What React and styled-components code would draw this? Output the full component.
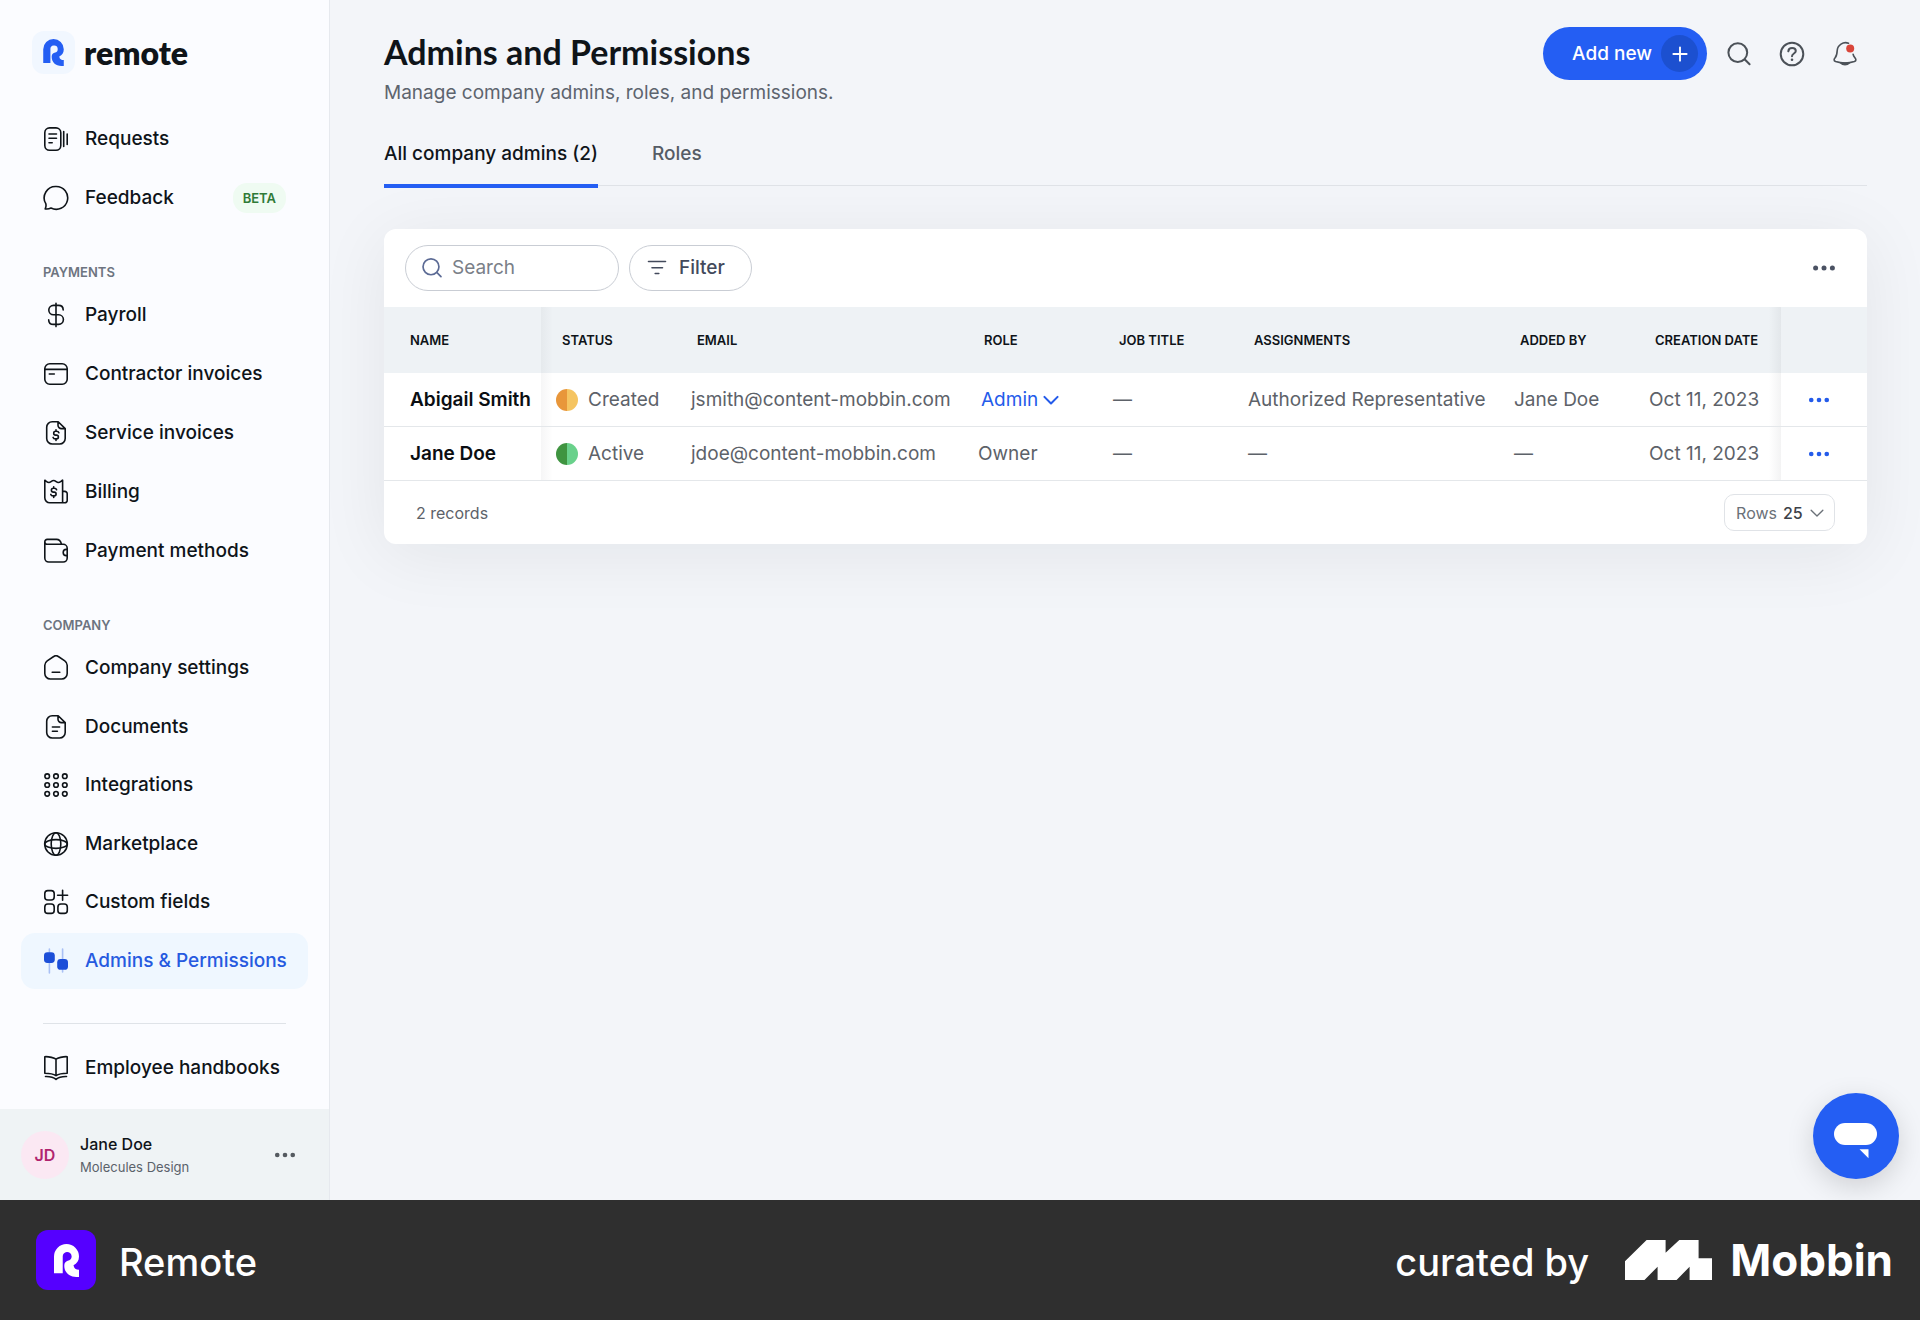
import { useState } from "react"
import styled, { createGlobalStyle, css } from "styled-components"

const GlobalStyle = createGlobalStyle`
    *{
        box-sizing: border-box;
    }
    body{
        margin: 0;
        background: #f3f5f9;
        color: #0f1419;
        font-family: Inter, "Liberation Sans", sans-serif;
        font-size: 19px;
        line-height: 26px;
    }
    button, input, select{
        font: inherit;
        color: inherit;
    }
    h1, p, ul{
        margin: 0;
        padding: 0;
    }
`

const FOLD = "M9.2 1.7h6l7 6.9v9.9a5.5 5.5 0 0 1-5.5 5.5H9.2a5.5 5.5 0 0 1-5.5-5.5V7.2a5.5 5.5 0 0 1 5.5-5.5z M15 1.8v3.4a3.4 3.4 0 0 0 3.4 3.4h3.7"
const DOLLAR = "M15.9 12.8c-.3-1-1.2-1.5-2.4-1.5h-.9a1.9 1.9 0 0 0 0 3.8h.9a1.9 1.9 0 0 1 0 3.8h-.9c-1.3 0-2.2-.5-2.5-1.5M13 9.8v1.4M13 19v1.4"

const icons = {
    requests: <>
        <rect x="1.8" y="1.9" width="16" height="22.4" rx="4.8" />
        <path d="M6 8h7.5M6 12.2h7.5M6 16.8h3.2M20.7 5.5v15M24.2 8v10.5" />
    </>,
    feedback: <path d="M13.2 1.5a11.4 11.4 0 1 1-5.2 21.5c-1.8 .9-3.8 1.2-5.8 .9 .8-1.7 1.1-3.4 .6-5.2A11.4 11.4 0 0 1 13.2 1.5z" />,
    payroll: <path d="M13 1.2v23.4M20.2 8c0-3-1.9-4.6-4.7-4.6h-5a4.7 4.7 0 0 0 0 9.4h5.1a4.8 4.8 0 0 1 0 9.6h-5.1c-3 0-4.8-1.6-4.8-4.5" />,
    contractor: <>
        <rect x="1.8" y="2.8" width="22.4" height="20.4" rx="5" />
        <path d="M1.8 8.4h22.4M6.3 13h5" />
    </>,
    service: <path d={ `${ FOLD }${ DOLLAR }` } />,
    billing: <>
        <path d="M1.8 1.2c1.5 1 2.6 2.3 4.2 2.3s2.6-2 4.6-2 3 2 4.6 2 2.8-1.3 4.4-2.3v22.6H6.8a5 5 0 0 1-5-5zM19.6 12.4h2.2a2.4 2.4 0 0 1 2.4 2.4v6.6a2.4 2.4 0 0 1-2.4 2.4h-3" />
        <path d={ DOLLAR } transform="translate(-2.3 -2)" />
    </>,
    wallet: <path d="M1.8 4v16a4 4 0 0 0 4 4h14.4a4 4 0 0 0 4-4v-9.7a4 4 0 0 0-4-4H4.3A2.5 2.5 0 0 1 1.8 3.8a2.4 2.4 0 0 1 2.4-2.4h9.4c2.5 0 4 1.5 4.9 4.7M24.2 11.4h-.9a3.1 3.1 0 0 0 0 6.2h.9" />,
    company: <path d="M10.7 1.5a4 4 0 0 1 4.6 0l6.5 4.3a5.5 5.5 0 0 1 2.4 4.5v8.2a5.5 5.5 0 0 1-5.5 5.5H7.3a5.5 5.5 0 0 1-5.5-5.5v-8.2a5.5 5.5 0 0 1 2.4-4.5zM9.2 17.2h7.6" />,
    documents: <path d={ `${ FOLD }M9.4 13h7.2M9.4 17.2h5` } />,
    integrations: [4.2, 13, 21.8].map( y => [4.2, 13, 21.8].map( x =>
        <circle key={ `${ x }-${ y }` } cx={ x } cy={ y } r="2.3" />
    )),
    marketplace: <>
        <circle cx="13" cy="13" r="11.3" />
        <ellipse cx="13" cy="13" rx="4.8" ry="11.3" />
        <ellipse cx="13" cy="13" rx="11.3" ry="4.4" />
    </>,
    custom: <>
        <rect x="1.8" y="1.6" width="9.4" height="9.4" rx="3" />
        <rect x="1.8" y="15" width="9.4" height="9.4" rx="3" />
        <rect x="14.9" y="15" width="9.4" height="9.4" rx="3" />
        <path d="M14.6 6.2h10M19.6 1.2v10" />
    </>,
    admins: <>
        <path d="M6.4 1v24M19.6 1v23" stroke="#a9c0f5" />
        <rect x="1" y="4.2" width="10.8" height="10.8" rx="3.4" fill="#1d4fd8" stroke="none" />
        <rect x="14.2" y="11" width="10.8" height="10.8" rx="3.4" fill="#1d4fd8" stroke="none" />
    </>,
    book: <path d="M13 4.2C11.5 3 6 1.4 1.8 1.7v16.5c4.2 0 8.2 .4 11.2 2.5 3-2.1 7-2.5 11.2-2.5V1.7C20 1.4 14.5 3 13 4.2zM13 4.2v16.5M2.5 21.5c4.3-.1 7.5 .2 10.5 2.8 3-2.6 6.2-2.9 10.5-2.8" />,
    search: <path strokeWidth="2" d="M11.8 2.2a9.4 9.4 0 1 1 0 18.8 9.4 9.4 0 0 1 0-18.8zM18.6 18.2l5 5" />,
    help: <>
        <circle cx="13" cy="13" r="11.3" strokeWidth="2" />
        <path strokeWidth="2" d="M9.3 10.3c.2-2 1.7-3.3 3.8-3.3 2.2 0 3.7 1.2 3.7 3 0 2.6-3.8 2.5-3.8 5.2" />
        <circle cx="13" cy="18.8" r="1.3" fill="currentColor" stroke="none" />
    </>,
    bell: <>
        <path d="M16.5 2.2a8.4 8.4 0 0 0-11.3 7.4c-.2 4.2-.6 5.4-2 7-1.4 1.5-1.6 3.2.4 4 6 1.9 12.8 1.9 18.8 0 2-.8 1.8-2.5.4-4-1-1.1-1.5-2-1.7-3.4" />
        <path d="M8.8 22a4.8 3.2 0 0 0 8.4 0z" fill="#9aa0a8" />
        <circle cx="18.2" cy="7.6" r="4" fill="#d9453a" stroke="none" />
    </>,
    filter: <path d="M4.5 6.5h17M8 12.8h10.5M11.2 18.5h3.6" />,
    plus: <path strokeWidth="2" d="M13 5.8v14.4M5.8 13h14.4" />,
    dots: <g fill="currentColor" stroke="none">
        <circle cx="4.6" cy="13" r="2.5" />
        <circle cx="13" cy="13" r="2.5" />
        <circle cx="21.4" cy="13" r="2.5" />
    </g>,
    chevron: <path strokeWidth="3" d="M3.5 8.5l9.5 9.5 9.5-9.5" />,
    thinChevron: <path strokeWidth="2.2" d="M3.5 8.5l9.5 9.5 9.5-9.5" />,
}

const Icon = ({ name, size = 26 }) => (
    <IconSvg width={ size } height={ size } viewBox="0 0 26 26" aria-hidden="true">
        { icons[name] }
    </IconSvg>
)

const RemoteMark = ({ width, height }) => (
    <svg width={ width } height={ height } viewBox="0 0 73 96" fill="currentColor" aria-hidden="true">
        <path d="M0 85V36.5a36.5 36.5 0 0 1 73 0C73 49 67 57 57 62c1 9 7 13 16 13v21h-8C44 96 30 82 30 63c0-8 4-12 10-14a13 13 0 1 0-14.5-12V85z" />
    </svg>
)

const mainLinks = [
    { icon: "requests", text: "Requests" },
    { icon: "feedback", text: "Feedback", badge: "BETA" },
]

const paymentLinks = [
    { icon: "payroll", text: "Payroll" },
    { icon: "contractor", text: "Contractor invoices" },
    { icon: "service", text: "Service invoices" },
    { icon: "billing", text: "Billing" },
    { icon: "wallet", text: "Payment methods" },
]

const companyLinks = [
    { icon: "company", text: "Company settings" },
    { icon: "documents", text: "Documents" },
    { icon: "integrations", text: "Integrations" },
    { icon: "marketplace", text: "Marketplace" },
    { icon: "custom", text: "Custom fields" },
    { icon: "admins", text: "Admins & Permissions", active: true },
]

const columns = [
    { title: "Name", width: 157 },
    { title: "Status", width: 135 },
    { title: "Email", width: 287 },
    { title: "Role", width: 135 },
    { title: "Job title", width: 135 },
    { title: "Assignments", width: 266 },
    { title: "Added by", width: 135 },
    { title: "Creation date", width: 147 },
    { title: "", width: 86 },
]

const admins = [
    {
        id: 1,
        name: "Abigail Smith",
        status: "Created",
        colors: ["#e8963a", "#f5c461"],
        email: "jsmith@content-mobbin.com",
        role: "Admin",
        editable: true,
        assignments: "Authorized Representative",
        addedBy: "Jane Doe",
        created: "Oct 11, 2023",
    },
    {
        id: 2,
        name: "Jane Doe",
        status: "Active",
        colors: ["#3f9440", "#69d18b"],
        email: "jdoe@content-mobbin.com",
        role: "Owner",
        created: "Oct 11, 2023",
    },
]

const NavList = ({ links, fill }) => (
    <List $fill={ fill }>
        { links.map( link => (
            <li key={ link.text }>
                <NavLink href="#" $active={ link.active }>
                    <Icon name={ link.icon } />
                    { link.text }
                    { link.badge && <Badge>{ link.badge }</Badge> }
                </NavLink>
            </li>
        ))}
    </List>
)

const Sidebar = () => (
    <Aside>
        <Brand href="#">
            <BrandTile><RemoteMark width={ 21 } height={ 27 } /></BrandTile>
            remote
        </Brand>
        <Nav>
            <NavList links={ mainLinks } />
            <SectionTitle>PAYMENTS</SectionTitle>
            <NavList links={ paymentLinks } />
            <SectionTitle>COMPANY</SectionTitle>
            <NavList links={ companyLinks } fill />
            <Divider />
            <NavList links={ [{ icon: "book", text: "Employee handbooks" }] } />
        </Nav>
        <UserBar>
            <Avatar>JD</Avatar>
            <UserInfo>
                <UserName>Jane Doe</UserName>
                <UserCompany>Molecules Design</UserCompany>
            </UserInfo>
            <IconButton aria-label="Account menu"><Icon name="dots" size={ 24 } /></IconButton>
        </UserBar>
    </Aside>
)

const AdminsTable = () => (
    <Table>
        <colgroup>
            { columns.map( ({ title, width }) => <col key={ title } style={ { width } } /> ) }
        </colgroup>
        <thead>
            <tr>
                { columns.map( ({ title }) => <th key={ title }>{ title.toUpperCase() }</th> ) }
            </tr>
        </thead>
        <tbody>
            { admins.map( admin => (
                <tr key={ admin.id }>
                    <td>{ admin.name }</td>
                    <td>
                        <Status>
                            <StatusDot $colors={ admin.colors } />
                            { admin.status }
                        </Status>
                    </td>
                    <td>{ admin.email }</td>
                    <td>
                        { admin.editable
                            ? <RolePicker>
                                <select aria-label="Role" defaultValue={ admin.role }>
                                    <option>{ admin.role }</option>
                                </select>
                                <Icon name="chevron" size={ 18 } />
                              </RolePicker>
                            : admin.role
                        }
                    </td>
                    <td>{ admin.jobTitle || "—" }</td>
                    <td>{ admin.assignments || "—" }</td>
                    <td>{ admin.addedBy || "—" }</td>
                    <td>{ admin.created }</td>
                    <td>
                        <IconButton $color="#245bea" aria-label={ `Actions for ${ admin.name }` }>
                            <Icon name="dots" size={ 24 } />
                        </IconButton>
                    </td>
                </tr>
            ))}
        </tbody>
    </Table>
)

const App = () => {

  const [ tab, setTab ] = useState( "all" )

  return (
    <Page>
        <GlobalStyle />
        <Sidebar />
        <Main>
            <Header>
                <div>
                    <Title>Admins and Permissions</Title>
                    <Subtitle>Manage company admins, roles, and permissions.</Subtitle>
                </div>
                <HeaderActions>
                    <AddButton>
                        Add new
                        <PlusCircle><Icon name="plus" size={ 24 } /></PlusCircle>
                    </AddButton>
                    <IconButton $color="#4b5158" aria-label="Search"><Icon name="search" /></IconButton>
                    <IconButton $color="#4b5158" aria-label="Help"><Icon name="help" /></IconButton>
                    <IconButton $color="#4b5158" aria-label="Notifications"><Icon name="bell" /></IconButton>
                </HeaderActions>
            </Header>
            <Tabs role="tablist">
                <Tab role="tab" aria-selected={ tab === "all" } $active={ tab === "all" } onClick={ ()=> setTab( "all" ) }>All company admins (2)</Tab>
                <Tab role="tab" aria-selected={ tab === "roles" } $active={ tab === "roles" } onClick={ ()=> setTab( "roles" ) }>Roles</Tab>
            </Tabs>
            <Card>
                <Toolbar>
                    <SearchBox>
                        <Icon name="search" size={ 22 } />
                        <input type="search" placeholder="Search" aria-label="Search admins" />
                    </SearchBox>
                    <FilterButton>
                        <Icon name="filter" />
                        Filter
                    </FilterButton>
                    <IconButton $color="#4b5263" aria-label="Table options"><Icon name="dots" /></IconButton>
                </Toolbar>
                <AdminsTable />
                <CardFooter>
                    2 records
                    <RowsPicker>
                        Rows
                        <select defaultValue="25">
                            <option>25</option>
                        </select>
                        <Icon name="thinChevron" size={ 16 } />
                    </RowsPicker>
                </CardFooter>
            </Card>
            <ChatButton aria-label="Open chat">
                <svg width="44" height="36" viewBox="0 0 44 36" fill="#fff">
                    <rect x="0" y="0" width="43" height="22" rx="11" />
                    <path d="M25.5 26.2h9v9z" />
                </svg>
            </ChatButton>
        </Main>
        <BottomBar>
            <AppTile><RemoteMark width={ 25 } height={ 33 } /></AppTile>
            <BarText>Remote</BarText>
            <Curated>
                <BarText>curated by</BarText>
                <svg width="87" height="40" viewBox="0 0 87 40" fill="#fff" aria-hidden="true">
                    <path d="M0 21.3L21.6 0h19v12.7L54.3 0h19.3v18.3H87V40H64.6V26.7L51.6 40h-19V26.7L19.5 40H0z" />
                </svg>
                <Mobbin>Mobbin</Mobbin>
            </Curated>
        </BottomBar>
    </Page>
  )
}

const Page = styled.div`
    display: grid;
    grid-template-columns: 330px minmax(0, 1fr);
    grid-template-rows: 1fr 120px;
    min-height: 100vh;
`

const IconSvg = styled.svg`
    flex: none;
    fill: none;
    stroke: currentColor;
    stroke-width: 1.6;
    stroke-linecap: round;
    stroke-linejoin: round;
`

const Aside = styled.aside`
    display: flex;
    flex-direction: column;
    background: #fbfcff;
    border-right: 1px solid #e6e9ee;
`

const Brand = styled.a`
    display: flex;
    align-items: center;
    gap: 9px;
    padding: 31px 32px 37px;
    color: #0f1419;
    font-family: Lato, sans-serif;
    font-size: 32px;
    font-weight: 800;
    text-decoration: none;
`

const BrandTile = styled.span`
    display: flex;
    align-items: center;
    justify-content: center;
    width: 43px;
    height: 43px;
    border-radius: 12px;
    background: #f1f7ff;
    color: #245ef3;
`

const Nav = styled.nav`
    display: flex;
    flex: 1;
    flex-direction: column;
    padding: 0 21px 13px;
`

const List = styled.ul`
    display: flex;
    flex-direction: column;
    gap: 3px;
    list-style: none;
    ${ ({ $fill }) => $fill && css`
        flex: 1;
        gap: 2px;
        justify-content: space-between;
    `}
`

const NavLink = styled.a`
    display: flex;
    align-items: center;
    gap: 16px;
    height: 56px;
    padding: 0 22px;
    border-radius: 14px;
    background: ${ ({ $active }) => $active ? "#eff7ff" : "none" };
    color: ${ ({ $active }) => $active ? "#265ae0" : "#0f1419" };
    font-weight: 500;
    text-decoration: none;
    white-space: nowrap;
`

const Badge = styled.span`
    margin-left: auto;
    padding: 2px 10px;
    border-radius: 14px;
    background: #effbf2;
    color: #2f7a37;
    font-size: 13px;
    font-weight: 600;
`

const SectionTitle = styled.p`
    padding: 34px 22px 3px;
    color: #6d7480;
    font-size: 13px;
    font-weight: 600;
    line-height: 24px;
`

const Divider = styled.hr`
    width: calc(100% - 44px);
    margin: 34px 22px 16px;
    border: none;
    border-top: 1px solid #dfe3e8;
`

const UserBar = styled.div`
    display: flex;
    align-items: center;
    gap: 11px;
    height: 91px;
    padding: 0 32px 0 21px;
    background: #eff3f5;
`

const Avatar = styled.span`
    display: flex;
    align-items: center;
    justify-content: center;
    width: 48px;
    height: 48px;
    border-radius: 50%;
    background: #fbe8f3;
    color: #b0246f;
    font-size: 16px;
    font-weight: 600;
`

const UserInfo = styled.div`
    flex: 1;
`

const UserName = styled.p`
    font-size: 16px;
    font-weight: 500;
    line-height: 24px;
`

const UserCompany = styled.p`
    color: #5b626b;
    font-size: 13px;
    line-height: 22px;
`

const IconButton = styled.button`
    display: inline-flex;
    padding: 0;
    border: none;
    background: none;
    color: ${ ({ $color }) => $color || "#555a60" };
    vertical-align: middle;
    cursor: pointer;
`

const Main = styled.main`
    position: relative;
    padding: 27px 53px 60px 54px;
`

const Header = styled.header`
    display: flex;
    align-items: flex-start;
    justify-content: space-between;
`

const Title = styled.h1`
    padding-top: 5px;
    font-family: Lato, sans-serif;
    font-size: 34px;
    font-weight: 700;
    line-height: 40px;
`

const Subtitle = styled.p`
    padding-top: 8px;
    color: #5d646e;
`

const HeaderActions = styled.div`
    display: flex;
    align-items: center;
    gap: 27px;
    padding-right: 9px;
`

const AddButton = styled.button`
    display: flex;
    align-items: center;
    gap: 9px;
    height: 53px;
    margin-right: -8px;
    padding: 0 9px 0 29px;
    border: none;
    border-radius: 27px;
    background: #245ef3;
    color: #fff;
    font-weight: 500;
    cursor: pointer;
`

const PlusCircle = styled.span`
    display: flex;
    align-items: center;
    justify-content: center;
    width: 37px;
    height: 37px;
    border-radius: 50%;
    background: #1c50d0;
`

const Tabs = styled.div`
    display: flex;
    gap: 54px;
    margin-top: 27px;
    border-bottom: 1px solid #e0e3e8;
`

const Tab = styled.button`
    margin-bottom: -3px;
    padding: 8px 0 17px;
    border: none;
    border-bottom: 4px solid ${ ({ $active }) => $active ? "#245ef3" : "transparent" };
    background: none;
    color: ${ ({ $active }) => $active ? "#0f1419" : "#555c66" };
    font-weight: 500;
    cursor: pointer;
`

const Card = styled.section`
    margin-top: 43px;
    overflow: hidden;
    border-radius: 12px;
    background: #fff;
    box-shadow: 0 10px 70px rgba(20, 25, 35, 0.07);
`

const Toolbar = styled.div`
    display: flex;
    align-items: center;
    gap: 10px;
    padding: 16px 30px 16px 21px;
    > :last-child{
        margin-left: auto;
    }
`

const pill = css`
    display: flex;
    align-items: center;
    gap: 9px;
    height: 46px;
    border: 1px solid #c9cdd4;
    border-radius: 23px;
    background: #fff;
`

const SearchBox = styled.label`
    ${ pill }
    width: 214px;
    padding: 0 16px 0 15px;
    color: #5c6b95;
    input{
        width: 100%;
        padding: 0;
        border: none;
        outline: none;
        background: none;
        color: #0f1419;
    }
    input::placeholder{
        color: #7a8088;
    }
`

const FilterButton = styled.button`
    ${ pill }
    padding: 0 26px 0 14px;
    color: #434a5c;
    font-weight: 500;
    cursor: pointer;
`

const Table = styled.table`
    width: 100%;
    table-layout: fixed;
    border-spacing: 0;
    th, td{
        text-align: left;
        white-space: nowrap;
    }
    th{
        height: 66px;
        padding: 0 0 0 21px;
        background-color: #eef2f5;
        font-size: 13px;
        font-weight: 600;
    }
    td{
        height: 54px;
        padding: 0 0 0 15px;
        border-bottom: 1px solid #e4e7ea;
        color: #5d6269;
    }
    th:first-child, td:first-child{
        padding-left: 26px;
    }
    td:first-child{
        color: #0b0e12;
        font-weight: 600;
    }
    td:last-child{
        padding-left: 26px;
    }
    /* the first and last columns cast a soft shadow over their neighbours */
    th:nth-child(2), td:nth-child(2){
        background-image: linear-gradient(to right, rgba(20, 25, 35, 0.04), transparent 12px);
    }
    th:nth-child(8), td:nth-child(8){
        background-image: linear-gradient(to left, rgba(20, 25, 35, 0.05), transparent 12px);
    }
`

const Status = styled.span`
    display: flex;
    align-items: center;
    gap: 10px;
`

const StatusDot = styled.span`
    width: 22px;
    height: 22px;
    border-radius: 50%;
    background: linear-gradient(to right, ${ ({ $colors }) => `${ $colors[0] } 50%, ${ $colors[1] } 50%` });
`

const RolePicker = styled.span`
    display: flex;
    align-items: center;
    gap: 3px;
    padding-left: 3px;
    color: #245bea;
    select{
        padding: 0;
        border: none;
        background: none;
        appearance: none;
    }
`

const CardFooter = styled.div`
    display: flex;
    align-items: center;
    justify-content: space-between;
    height: 63px;
    padding: 0 32px;
    color: #5d6269;
    font-size: 16px;
`

const RowsPicker = styled.label`
    display: flex;
    align-items: center;
    gap: 6px;
    height: 37px;
    padding: 0 9px 0 11px;
    border: 1px solid #e0e3e7;
    border-radius: 10px;
    color: #6b7178;
    select{
        padding: 0;
        border: none;
        background: none;
        color: #3c4148;
        font-weight: 500;
        appearance: none;
    }
`

const ChatButton = styled.button`
    position: absolute;
    right: 21px;
    bottom: 21px;
    display: flex;
    align-items: center;
    justify-content: center;
    width: 86px;
    height: 86px;
    padding: 9px 0 0;
    border: none;
    border-radius: 50%;
    background: #245ef3;
    box-shadow: 0 8px 28px rgba(0, 0, 0, 0.15);
    cursor: pointer;
`

const BottomBar = styled.footer`
    position: relative;
    display: flex;
    grid-column: 1 / -1;
    align-items: center;
    padding: 0 27px 0 36px;
    background: #2f2f2f;
    color: #fff;
`

const AppTile = styled.span`
    display: flex;
    align-items: center;
    justify-content: center;
    width: 60px;
    height: 60px;
    margin-right: 23px;
    border-radius: 12px;
    background: #5500ff;
`

const BarText = styled.span`
    padding-top: 4px;
    font-size: 38px;
    font-weight: 500;
    line-height: 48px;
`

const Curated = styled.div`
    display: flex;
    align-items: center;
    gap: 18px;
    margin-left: auto;
    svg{
        margin-left: 18px;
    }
`

const Mobbin = styled.span`
    font-size: 44px;
    font-weight: 700;
    line-height: 48px;
`

export default App
